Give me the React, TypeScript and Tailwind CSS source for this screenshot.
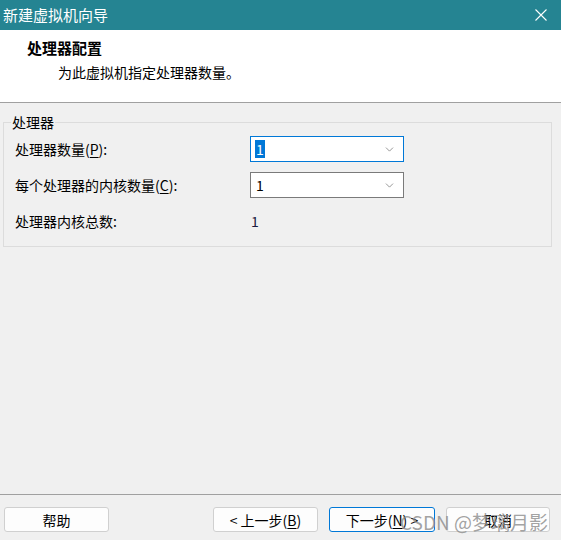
import { ChevronDown } from "lucide-react";

const font = { fontFamily: '"Noto Sans CJK SC", "Noto Sans", sans-serif' };

function Combo({ focused, value }: { focused?: boolean; value: string }) {
  return (
    <div
      className={`flex h-[26px] w-[154px] items-center justify-between bg-white pl-[4px] pr-[7px] ${
        focused ? "border border-[#0078d7]" : "border border-[#7a7a7a]"
      }`}
    >
      {focused ? (
        <span className="bg-[#0078d7] px-[1px] text-[14px] leading-[18px] text-white">{value}</span>
      ) : (
        <span className="px-[1px] text-[14px] leading-[18px] text-black">{value}</span>
      )}
      <ChevronDown size={13} strokeWidth={1.2} className="text-[#606060]" />
    </div>
  );
}

function Btn({ children, primary, w = "w-[105px]" }: { children: React.ReactNode; primary?: boolean; w?: string }) {
  return (
    <button
      className={`h-[25px] ${w} rounded-[3px] bg-[#fdfdfd] text-[14px] leading-none text-black ${
        primary ? "border border-[#0078d7]" : "border border-[#d0d0d0]"
      }`}
    >
      {children}
    </button>
  );
}

export default function App() {
  return (
    <div className="relative flex h-[540px] w-[561px] flex-col overflow-hidden bg-[#f0f0f0]" style={font}>
      {/* title bar */}
      <div className="flex h-[30px] items-center justify-between bg-[#258492] pl-[3px] pr-[14px]">
        <span className="text-[15px] text-white">新建虚拟机向导</span>
        <svg width="12" height="12" viewBox="0 0 12 12" className="text-white">
          <path d="M0.5 0.5 L11.5 11.5 M11.5 0.5 L0.5 11.5" stroke="currentColor" strokeWidth="1.1" />
        </svg>
      </div>

      {/* header */}
      <div className="flex h-[72px] flex-col bg-white pl-[27px] pt-[7px]">
        <span className="text-[15px] font-bold leading-[22px] text-black">处理器配置</span>
        <span className="ml-[31px] mt-[2px] text-[14px] leading-[22px] text-black">为此虚拟机指定处理器数量。</span>
      </div>
      <div className="h-px bg-[#a0a0a0]" />

      {/* body */}
      <div className="flex-1 px-[3px] pt-[19px]">
        <div className="relative w-[549px] border border-[#dcdcdc] pb-[12px] pl-[11px] pt-[13px]">
          <span className="absolute -top-[11px] left-[7px] bg-[#f0f0f0] px-[1px] text-[14px] leading-[20px] text-black">
            处理器
          </span>
          <div className="flex flex-col gap-[10px] text-[14px] text-black">
            <div className="flex h-[26px] items-center">
              <span className="w-[235px]">
                处理器数量(<span className="underline underline-offset-2">P</span>):
              </span>
              <Combo focused value="1" />
            </div>
            <div className="flex h-[26px] items-center">
              <span className="w-[235px]">
                每个处理器的内核数量(<span className="underline underline-offset-2">C</span>):
              </span>
              <Combo value="1" />
            </div>
            <div className="flex h-[26px] items-center">
              <span className="w-[236px]">处理器内核总数:</span>
              <span className="text-[#1a1a40]">1</span>
            </div>
          </div>
        </div>
      </div>

      {/* footer */}
      <div className="h-px bg-[#a0a0a0]" />
      <div className="flex items-center pb-[8px] pl-[4px] pr-[11px] pt-[12px]">
        <Btn>帮助</Btn>
        <div className="ml-auto flex gap-[11px]">
          <Btn>
            &lt; 上一步(<span className="underline underline-offset-2">B</span>)
          </Btn>
          <Btn primary w="w-[106px]">
            下一步(<span className="underline underline-offset-2">N</span>) &gt;
          </Btn>
          <Btn w="w-[104px]">取消</Btn>
        </div>
      </div>

      {/* watermark */}
      <span className="pointer-events-none absolute bottom-[4px] right-[13px] text-[19px] text-[#8a8a8a]/80">
        CSDN @梦璃月影
      </span>
    </div>
  );
}
